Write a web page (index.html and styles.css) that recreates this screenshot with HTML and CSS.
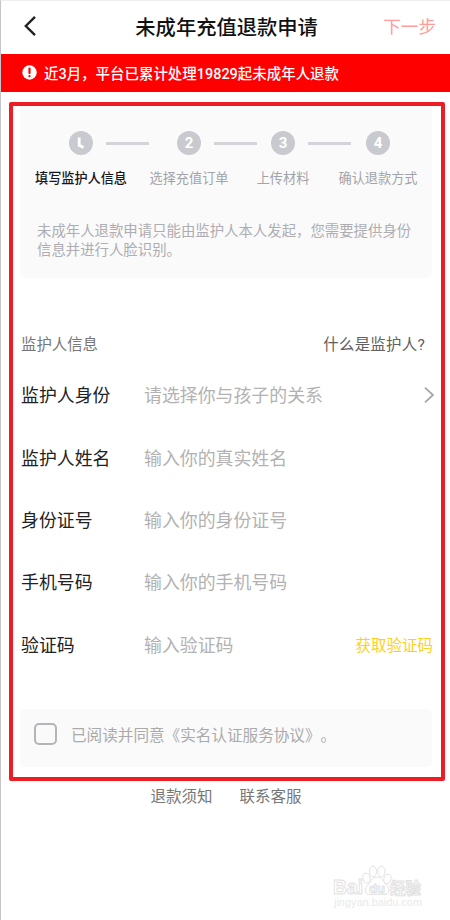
FILE: index.html
```
<!DOCTYPE html>
<html lang="zh-CN">
<head>
  <meta charset="UTF-8">
  <meta name="viewport" content="width=device-width, initial-scale=1">
  <title>未成年充值退款申请</title>
  <link rel="stylesheet" href="styles.css">
</head>
<body>
  <div class="page">
    <header class="header">
      <svg class="back" width="14" height="22" viewBox="0 0 14 22"><path d="M12 1.8 2.8 11l9.2 9.2"/></svg>
      <h1>未成年充值退款申请</h1>
      <span class="next">下一步</span>
    </header>

    <div class="notice">
      <svg class="notice-icon" width="15" height="15" viewBox="0 0 15 15">
        <circle cx="7.5" cy="7.5" r="7.2"/>
        <path d="M7.5 3.5v4.6M7.5 11v.2"/>
      </svg>
      <span>近3月，平台已累计处理19829起未成年人退款</span>
    </div>

    <main class="frame">
      <section class="steps-card">
        <div class="steps">
          <div class="step">
            <span class="dot"><svg width="24" height="24" viewBox="0 0 24 24"><path d="M10.2 6.5v7.8l4.3 2.2"/></svg></span>
            <span class="step-name active">填写监护人信息</span>
          </div>
          <i class="line line-first"></i>
          <div class="step"><span class="dot">2</span><span class="step-name">选择充值订单</span></div>
          <i class="line"></i>
          <div class="step"><span class="dot">3</span><span class="step-name">上传材料</span></div>
          <i class="line line-last"></i>
          <div class="step"><span class="dot">4</span><span class="step-name">确认退款方式</span></div>
        </div>
        <p class="tip">未成年人退款申请只能由监护人本人发起，您需要提供身份信息并进行人脸识别。</p>
      </section>

      <div class="section-title">
        <span>监护人信息</span>
        <a class="what">什么是监护人?</a>
      </div>

      <div class="form">
        <div class="row">
          <label>监护人身份</label>
          <span class="hint">请选择你与孩子的关系</span>
          <svg class="more" width="12" height="18" viewBox="0 0 12 18"><path d="M2 1.6 10 9l-8 7.4"/></svg>
        </div>
        <div class="row"><label>监护人姓名</label><span class="hint">输入你的真实姓名</span></div>
        <div class="row"><label>身份证号</label><span class="hint">输入你的身份证号</span></div>
        <div class="row"><label>手机号码</label><span class="hint">输入你的手机号码</span></div>
        <div class="row"><label>验证码</label><span class="hint">输入验证码</span><a class="get-code">获取验证码</a></div>
      </div>

      <div class="agree">
        <span class="checkbox"></span>
        <span>已阅读并同意《实名认证服务协议》。</span>
      </div>
    </main>

    <footer class="links">
      <a>退款须知</a>
      <a>联系客服</a>
    </footer>

    <!-- 水印 -->
    <svg class="watermark" width="100" height="50" viewBox="0 0 100 50">
      <g class="outline">
        <text x="2" y="30" class="wm-logo" textLength="30" lengthAdjust="spacingAndGlyphs">Bai</text>
        <ellipse cx="35.5" cy="14" rx="3.6" ry="5" transform="rotate(-15 35.5 14)"/>
        <ellipse cx="42" cy="7.5" rx="3.6" ry="5.2"/>
        <ellipse cx="50.5" cy="7.5" rx="3.6" ry="5.2"/>
        <ellipse cx="56.5" cy="15" rx="3.6" ry="4.8" transform="rotate(15 56.5 15)"/>
        <path d="M46 13c-5 0-6 5-9 8-4 3.500-4 9.500 2 9.500 5 0 9-.5 14 0 6 0 6-6 2.500-9.500-3.500-3.500-4.500-8-9.500-8z"/>
        <text x="38" y="28.5" class="wm-du">du</text>
        <text x="59" y="29.5" class="wm-cn">经验</text>
      </g>
      <text x="3" y="42" class="wm-url" textLength="88" lengthAdjust="spacingAndGlyphs">jingyan.baidu.com</text>
    </svg>
  </div>
</body>
</html>
```
FILE: styles.css
```
* { box-sizing: border-box; margin: 0; padding: 0; }
body {
  background: #fff;
  font-family: Roboto, "Noto Sans CJK SC", sans-serif;
  color: #222;
  text-spacing-trim: space-all;
}
svg { flex: none; fill: none; }

.page {
  position: relative;
  height: 920px;
  border-left: 1px solid #c4c4ca;
  border-top: 1px solid #eee;
  overflow: hidden;
}

/* 顶部导航 */
.header {
  display: flex;
  align-items: center;
  justify-content: space-between;
  height: 53px;
  padding: 0 14px 3px 22px;
}
.back { stroke: #222; stroke-width: 2.4; }
.header h1 {
  margin-left: 33px;
  font-size: 20.3px;
  font-weight: 500;
  color: #111;
}
.next { margin-top: -2px; font-size: 17.6px; color: #ff9c9c; }

/* 公告 */
.notice {
  display: flex;
  align-items: center;
  gap: 7px;
  height: 38px;
  padding: 0 0 2px 21px;
  background: #fe0000;
  color: #fff;
  font-size: 14.46px;
  font-weight: 500;
}
.notice-icon { margin-top: 1px; }
.notice-icon circle { fill: #fff; }
.notice-icon path { stroke: #fe0000; stroke-width: 2.2; stroke-linecap: round; }

/* 红框区域 */
.frame {
  width: 436px;
  height: 679px;
  margin: 10px 0 0 8px;
  padding: 0 9px 0 7px;
  border: 4px solid #ee1c25;
  border-radius: 2px;
}

/* 步骤 */
.steps-card {
  height: 172px;
  padding: 25px 14px 0;
  background: #fafafa;
  border-radius: 0 0 5px 5px;
}
.steps { display: flex; align-items: flex-start; height: 91px; padding-left: 35px; }
.step {
  display: flex;
  flex-direction: column;
  align-items: center;
  gap: 14px;
  width: 24px;
}
.dot {
  width: 24px;
  height: 24px;
  border-radius: 50%;
  background: #c9cacf;
  color: #fff;
  font-size: 15px;
  font-weight: 700;
  line-height: 24px;
  text-align: center;
}
.dot svg { display: block; }
.dot path { stroke: #fff; stroke-width: 2.8; }
.step-name { font-size: 13.15px; line-height: 20px; color: #a2a3a8; white-space: nowrap; }
.step-name.active { color: #16161f; font-weight: 500; }
.line { width: 43px; height: 3px; margin: 11px 14px 0 13px; background: #d3d4d8; }
.line-first { margin-right: 28px; }
.line-last { margin-right: 15px; }
.tip {
  width: 376px;
  margin-left: 3px;
  font-size: 14.4px;
  line-height: 19.4px;
  color: #adadb2;
}

/* 表单 */
.section-title {
  display: flex;
  justify-content: space-between;
  margin-top: 55px;
  padding: 0 7px 0 1px;
  font-size: 15.4px;
  line-height: 24px;
  color: #777;
}
.what { color: #606060; letter-spacing: 0.3px; }
.form { margin-top: 6px; }
.row {
  display: flex;
  align-items: center;
  height: 62.4px;
  padding-left: 1px;
  font-size: 17.9px;
}
.row label { width: 123px; color: #222; }
.hint { flex: 1; color: #b2b2b2; }
.more { margin: 2px -3px 0 0; stroke: #a6a6a6; stroke-width: 1.8; }
.get-code { margin-right: -1px; font-size: 15.5px; color: #ffcf20; }

/* 协议 */
.agree {
  display: flex;
  align-items: center;
  gap: 14px;
  height: 58px;
  margin-top: 34px;
  padding: 0 0 8px 14px;
  background: #fafafa;
  border-radius: 5px;
  font-size: 15.6px;
  color: #aaa;
}
.checkbox { width: 23px; height: 22px; border: 2px solid #b4b4b9; border-radius: 5px; }

/* 底部链接 */
.links {
  display: flex;
  justify-content: center;
  gap: 27px;
  margin: 4px 0 0 1px;
  font-size: 15.5px;
  line-height: 24px;
  color: #777;
}

/* 水印 */
.watermark { position: absolute; left: 330px; top: 863px; }
.outline { fill: #fff; stroke: #e2e2e2; stroke-width: 1; }
.wm-logo { font: 700 21px "Liberation Sans", sans-serif; }
.wm-du { font: 700 13px "Liberation Sans", sans-serif; }
.wm-cn { font: 700 15.5px "Noto Sans CJK SC", sans-serif; }
.wm-url { font: 11px "Liberation Sans", sans-serif; fill: #e9e9e9; }
```
